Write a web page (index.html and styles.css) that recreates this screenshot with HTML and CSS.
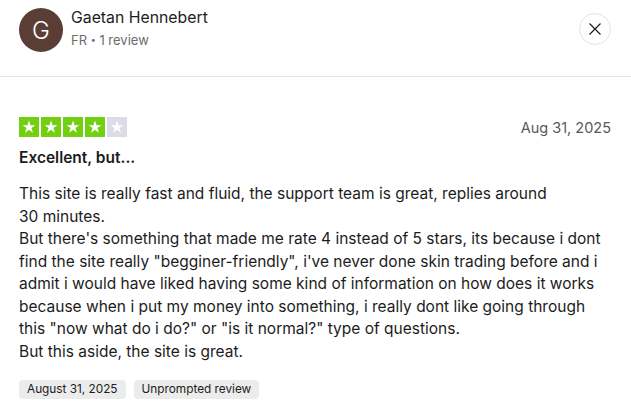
FILE: index.html
```html
<!DOCTYPE html>
<html>
<head>
<meta charset="utf-8">
<link rel="stylesheet" href="styles.css">
</head>
<body>
<div class="panel">
  <header class="head">
    <div class="avatar">G</div>
    <div class="who">
      <div class="name">Gaetan Hennebert</div>
      <div class="meta">FR <span class="dot">•</span> 1 review</div>
    </div>
    <button class="close" aria-label="Close">
      <svg width="14" height="14" viewBox="0 0 14 14"><path d="M1.5 1.5 L12.5 12.5 M12.5 1.5 L1.5 12.5" stroke="#1c1c1c" stroke-width="1.2" fill="none"/></svg>
    </button>
  </header>
  <main class="review">
    <div class="toprow">
      <div class="stars">
        <span class="star on"><svg viewBox="0 0 20 20"><path d="M10 3.6l1.55 4.6h4.8l-3.9 2.85 1.5 4.6L10 12.8l-3.95 2.85 1.5-4.6-3.9-2.85h4.8z" fill="#fff"/></svg></span>
        <span class="star on"><svg viewBox="0 0 20 20"><path d="M10 3.6l1.55 4.6h4.8l-3.9 2.85 1.5 4.6L10 12.8l-3.95 2.85 1.5-4.6-3.9-2.85h4.8z" fill="#fff"/></svg></span>
        <span class="star on"><svg viewBox="0 0 20 20"><path d="M10 3.6l1.55 4.6h4.8l-3.9 2.85 1.5 4.6L10 12.8l-3.95 2.85 1.5-4.6-3.9-2.85h4.8z" fill="#fff"/></svg></span>
        <span class="star on"><svg viewBox="0 0 20 20"><path d="M10 3.6l1.55 4.6h4.8l-3.9 2.85 1.5 4.6L10 12.8l-3.95 2.85 1.5-4.6-3.9-2.85h4.8z" fill="#fff"/></svg></span>
        <span class="star off"><svg viewBox="0 0 20 20"><path d="M10 3.6l1.55 4.6h4.8l-3.9 2.85 1.5 4.6L10 12.8l-3.95 2.85 1.5-4.6-3.9-2.85h4.8z" fill="#fff"/></svg></span>
      </div>
      <div class="date">Aug 31, 2025</div>
    </div>
    <h2 class="title">Excellent, but...</h2>
    <p class="text">This site is really fast and fluid, the support team is great, replies around<br>30 minutes.<br>But there's something that made me rate 4 instead of 5 stars, its because i dont find the site really "begginer-friendly", i've never done skin trading before and i admit i would have liked having some kind of information on how does it works because when i put my money into something, i really dont like going through this "now what do i do?" or "is it normal?" type of questions.<br>But this aside, the site is great.</p>
    <div class="tags">
      <span class="tag">August 31, 2025</span>
      <span class="tag">Unprompted review</span>
    </div>
  </main>
</div>
</body>
</html>
```
FILE: styles.css
```css
* { box-sizing: border-box; }
html, body { margin: 0; padding: 0; background: #fff; }
body {
  font-family: Inter, "Noto Sans", "Liberation Sans", sans-serif;
  color: #1c1c1c;
  width: 631px;
  height: 417px;
  overflow: hidden;
}
.head {
  display: flex;
  align-items: flex-start;
  padding: 8px 20px 0 19px;
  height: 77px;
  border-bottom: 1px solid #e5e5e5;
}
.avatar {
  width: 44px;
  height: 44px;
  border-radius: 50%;
  background: #5a3e36;
  color: #fff;
  font-size: 24px;
  font-weight: 300;
  display: flex;
  align-items: center;
  justify-content: center;
  flex: none;
}
.who {
  margin-left: 8px;
  flex: 1;
}
.name {
  font-size: 15.8px;
  line-height: 20px;
  color: #1c1c1c;
}
.meta {
  font-size: 13px;
  line-height: 18px;
  margin-top: 3px;
  color: #6c6c6c;
}
.dot { font-size: 9px; vertical-align: 2px; }
.close {
  width: 32px;
  height: 32px;
  border-radius: 50%;
  border: 1px solid #e3e3e3;
  background: #fff;
  padding: 0;
  margin-top: 5px;
  display: flex;
  align-items: center;
  justify-content: center;
  flex: none;
}
.review {
  padding: 40px 20px 0 19px;
}
.toprow {
  display: flex;
  justify-content: space-between;
  align-items: center;
  height: 20px;
}
.stars { display: flex; gap: 2px; }
.star {
  width: 20px;
  height: 20px;
  display: block;
}
.star svg { width: 20px; height: 20px; display: block; }
.star.on { background: #73cf11; }
.star.off { background: #dcdce6; }
.date {
  font-size: 14.5px;
  color: #595959;
}
.title {
  font-size: 15.5px;
  font-weight: 600;
  line-height: 22px;
  margin: 10px 0 0;
  color: #1c1c1c;
}
.text {
  font-size: 15.5px;
  line-height: 22.5px;
  margin: 14px 0 0 0;
  color: #1c1c1c;
}
.tags {
  display: flex;
  gap: 8px;
  margin-top: 17px;
}
.tag {
  font-size: 11.8px;
  line-height: 19px;
  padding: 0 8px;
  background: #ececec;
  border-radius: 4px;
  color: #1c1c1c;
}
```
